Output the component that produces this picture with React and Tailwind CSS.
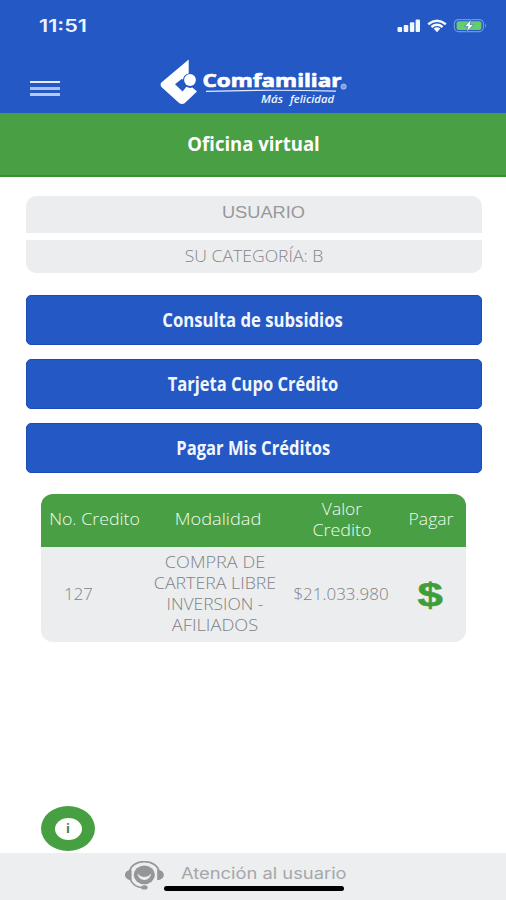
import { clsx } from 'clsx';

const ACTIONS = [
  { id: 'subsidios', label: 'Consulta de subsidios', stretch: 'scale-x-[0.88]' },
  { id: 'cupo', label: 'Tarjeta Cupo Crédito', stretch: 'scale-x-[0.87]' },
  { id: 'pagar', label: 'Pagar Mis Créditos', stretch: 'scale-x-[0.872]' },
];

const MODALIDAD = [
  { text: 'COMPRA DE', stretch: 'scale-x-[1.13]' },
  { text: 'CARTERA LIBRE', stretch: 'scale-x-[1.11]' },
  { text: 'INVERSION -', stretch: 'scale-x-[1.09]' },
  { text: 'AFILIADOS', stretch: 'scale-x-[1.14]' },
];

const COLUMNS = 'grid grid-cols-[107px_140px_108px_70px] items-center text-center';

const Label = ({ stretch, className, children }) => (
  <span className={clsx('inline-block whitespace-nowrap', stretch, className)}>{children}</span>
);

const StatusIcons = () => (
  <svg width="92" height="18" viewBox="0 0 92 18" className="shrink-0">
    {/* Signal */}
    <g fill="#f1f6ff">
      <rect x="0.5" y="10" width="4.6" height="5" rx="1" />
      <rect x="6.7" y="8" width="4.6" height="7" rx="1" />
      <rect x="12.9" y="5.2" width="4.4" height="9.8" rx="1" />
      <rect x="18.6" y="2.6" width="4.4" height="12.4" rx="1" />
    </g>
    {/* Wifi */}
    <g fill="none" stroke="#f5f9ff" strokeWidth="2.4">
      <path d="M31.2 7.2Q40 0.4 48.8 7.2" />
      <path d="M34.4 10Q40 5.6 45.6 10" />
    </g>
    <path d="M36.6 11.5Q40 8.9 43.4 11.5L40 15.2Z" fill="#f5f9ff" />
    {/* Battery */}
    <rect x="57.4" y="2.6" width="29" height="12" rx="4" fill="none" stroke="#7393dc" strokeWidth="1.2" />
    <path d="M88.2 6.3Q90.4 8.6 88.2 10.9Z" fill="#7393dc" />
    <rect x="59.6" y="4.2" width="24.8" height="8.8" rx="2" fill="#62cf6b" />
    <path d="M74.2 2.4L67.4 9.4H71L69.6 14.8L76.8 7.6H73Z" fill="#fff" stroke="#3560b4" strokeWidth="0.6" />
  </svg>
);

const Logo = () => (
  <svg width="188" height="48" viewBox="160 58 188 48" className="shrink-0">
    <path
      d="M188.7 59.5V73.4A7 7 0 0 0 183 79.4L181.6 79L175 84.2L182.6 91.4L186.4 86.8Q189.6 88.6 192.4 87.4L197 91.6L184.6 103.2Q182 104.8 179.4 103.2L161.4 87Q159.8 84.8 161.4 82.6Z"
      fill="#fff"
    />
    <circle cx="190" cy="80" r="5.9" fill="#fff" />
    <text
      x="202.5" y="87.4" textLength="139" lengthAdjust="spacingAndGlyphs"
      fill="#fff" stroke="#fff" strokeWidth="0.7" fontSize="18.5" fontWeight="700" fontFamily="'Open Sans', sans-serif"
    >
      Comfamiliar
    </text>
    <path d="M206 91.4Q270 89.2 336 91.2" fill="none" stroke="#e4edff" strokeWidth="1.2" />
    <circle cx="343.6" cy="86.6" r="2.6" fill="#7d9ce2" stroke="#bccdf3" strokeWidth="0.8" />
    <g fill="#eef4ff" fontSize="11.5" fontStyle="italic" fontWeight="600" fontFamily="'Open Sans', sans-serif">
      <text x="261" y="102.8" textLength="22" lengthAdjust="spacingAndGlyphs">Más</text>
      <text x="290" y="102.8" textLength="44" lengthAdjust="spacingAndGlyphs">felicidad</text>
    </g>
  </svg>
);

const HeadsetIcon = () => (
  <svg width="40" height="30" viewBox="0 0 40 30" className="shrink-0">
    <ellipse cx="19.3" cy="13.8" rx="10.6" ry="9.4" fill="#949699" />
    <path d="M12.4 12.6Q15.6 16.4 19.3 15.8Q23 16.4 26.2 12.6Q25 19 19.3 19T12.4 12.6Z" fill="#eceeef" />
    <path d="M4.6 10C8 -2.4 30.6 -2.4 34 10" fill="none" stroke="#949699" strokeWidth="1.8" />
    <path d="M5 18C7.3 23.5 12 26.3 18 26.8" fill="none" stroke="#949699" strokeWidth="1.6" />
    <path d="M6.6 8.8V19C2.6 19 0 16.6 0 13.9S2.6 8.8 6.6 8.8ZM32.2 8.8V19C36.2 19 38.8 16.6 38.8 13.9S36.2 8.8 32.2 8.8Z" fill="#949699" />
    <ellipse cx="19.4" cy="26.4" rx="3.2" ry="2.2" fill="#949699" />
  </svg>
);

const App = () => {
  return (
    <div className="relative flex h-[900px] w-[506px] flex-col overflow-hidden bg-white font-['Open_Sans',sans-serif]">
      {/* Header */}
      <header className="h-[113px] bg-[#2458c5]">
        <div className="flex h-[52px] items-center justify-between pr-[17px] pl-[39px]">
          <Label className="mt-[2px] origin-left font-['Inter',sans-serif] text-[17px] font-semibold text-[#edf3ff]" stretch="scale-x-[1.27]">
            11:51
          </Label>
          <StatusIcons />
        </div>
        <div className="flex pt-[6px] pl-[30px]">
          <button aria-label="Menú" className="mt-[23px] mr-[100px] flex h-[15px] w-[30px] flex-col justify-between">
            <span className="h-[2px] w-full bg-[#e5eefe]" />
            <span className="h-[3px] w-full bg-[#a9c1f2]" />
            <span className="h-[3px] w-full bg-[#b5caf5]" />
          </button>
          <Logo />
        </div>
      </header>

      <div className="flex h-16 items-center justify-center border-b-2 border-[#39902f] bg-[#499f44] text-xl font-bold text-white">
        <Label className="ml-px" stretch="scale-x-[0.925]">Oficina virtual</Label>
      </div>

      <main className="flex-1 px-[26px] pt-[19px]">
        {/* User data */}
        <div className="w-[456px] space-y-[7px] text-center text-[#97999c]">
          <div className="flex h-[37px] items-center justify-center rounded-t-[10px] bg-[#ecedef] pl-[19px] pb-1 font-['Liberation_Sans',sans-serif] text-base">
            <Label stretch="scale-x-[1.14]">USUARIO</Label>
          </div>
          <div className="flex h-[33px] items-center justify-center rounded-b-[10px] bg-[#ecedef] pb-px text-[17px] font-light text-[#85878a]">
            <Label stretch="scale-x-[1.035]">SU CATEGORÍA: B</Label>
          </div>
        </div>

        {/* Actions */}
        <div className="mt-[22px] w-[456px] space-y-[14px]">
          {ACTIONS.map((action) => (
            <button
              key={action.id}
              className="flex h-[50px] w-full items-center justify-center rounded-[5px] border border-[#1b4bb8] bg-[#2458c5] pr-[2px] text-[19px] font-bold text-[#f1f6ff]"
            >
              <Label stretch={action.stretch}>{action.label}</Label>
            </button>
          ))}
        </div>

        {/* Credits */}
        <div className="mt-[21px] ml-[15px] w-[425px] overflow-hidden rounded-[12px] bg-[#ecedef] text-base leading-[21px] font-light">
          <div className={clsx(COLUMNS, 'h-[53px] bg-[#499f44] pb-[2px] text-[#f0fcee]')}>
            <Label stretch="scale-x-[1.11]">No. Credito</Label>
            <Label stretch="scale-x-[1.14]">Modalidad</Label>
            <div className="flex flex-col">
              <Label stretch="scale-x-[1.09]">Valor</Label>
              <Label stretch="scale-x-[1.12]">Credito</Label>
            </div>
            <Label stretch="scale-x-[1.1]">Pagar</Label>
          </div>
          <div className={clsx(COLUMNS, 'h-[95px] text-[#7f8184]')}>
            <Label className="mr-8 pb-px" stretch="scale-x-[1.05]">127</Label>
            <div className="mr-[6px] flex flex-col pb-px">
              {MODALIDAD.map((line) => (
                <Label key={line.text} stretch={line.stretch}>{line.text}</Label>
              ))}
            </div>
            <Label className="mr-[2px] pb-px" stretch="scale-x-[1.06]">$21.033.980</Label>
            <button className="mr-[2px] pb-px font-['Liberation_Sans',sans-serif] text-[33px] leading-none font-bold text-[#3f9d3a] [-webkit-text-stroke:0.5px_#3f9d3a]">
              <Label stretch="scale-x-[1.38]">$</Label>
            </button>
          </div>
        </div>
      </main>

      {/* Info button */}
      <button className="absolute top-[806px] left-[41px] flex h-[45px] w-[54px] items-center justify-center rounded-[50%] bg-[#469f40]">
        <span className="flex h-[22px] w-[27px] items-center justify-center rounded-[50%] bg-white font-['Noto_Sans',sans-serif] text-[13px] font-bold text-[#4f7a4c]">
          i
        </span>
      </button>

      <footer className="flex h-[47px] bg-[#eceeef] pt-[8px] pl-[125px] font-['Inter',sans-serif] text-[16px] text-[#a5a7aa]">
        <HeadsetIcon />
        <Label className="ml-4 origin-left" stretch="scale-x-[1.145]">Atención al usuario</Label>
      </footer>
      <div className="absolute top-[886px] left-[164px] h-[5px] w-[180px] rounded-full bg-black" />
    </div>
  );
};

export default App;
